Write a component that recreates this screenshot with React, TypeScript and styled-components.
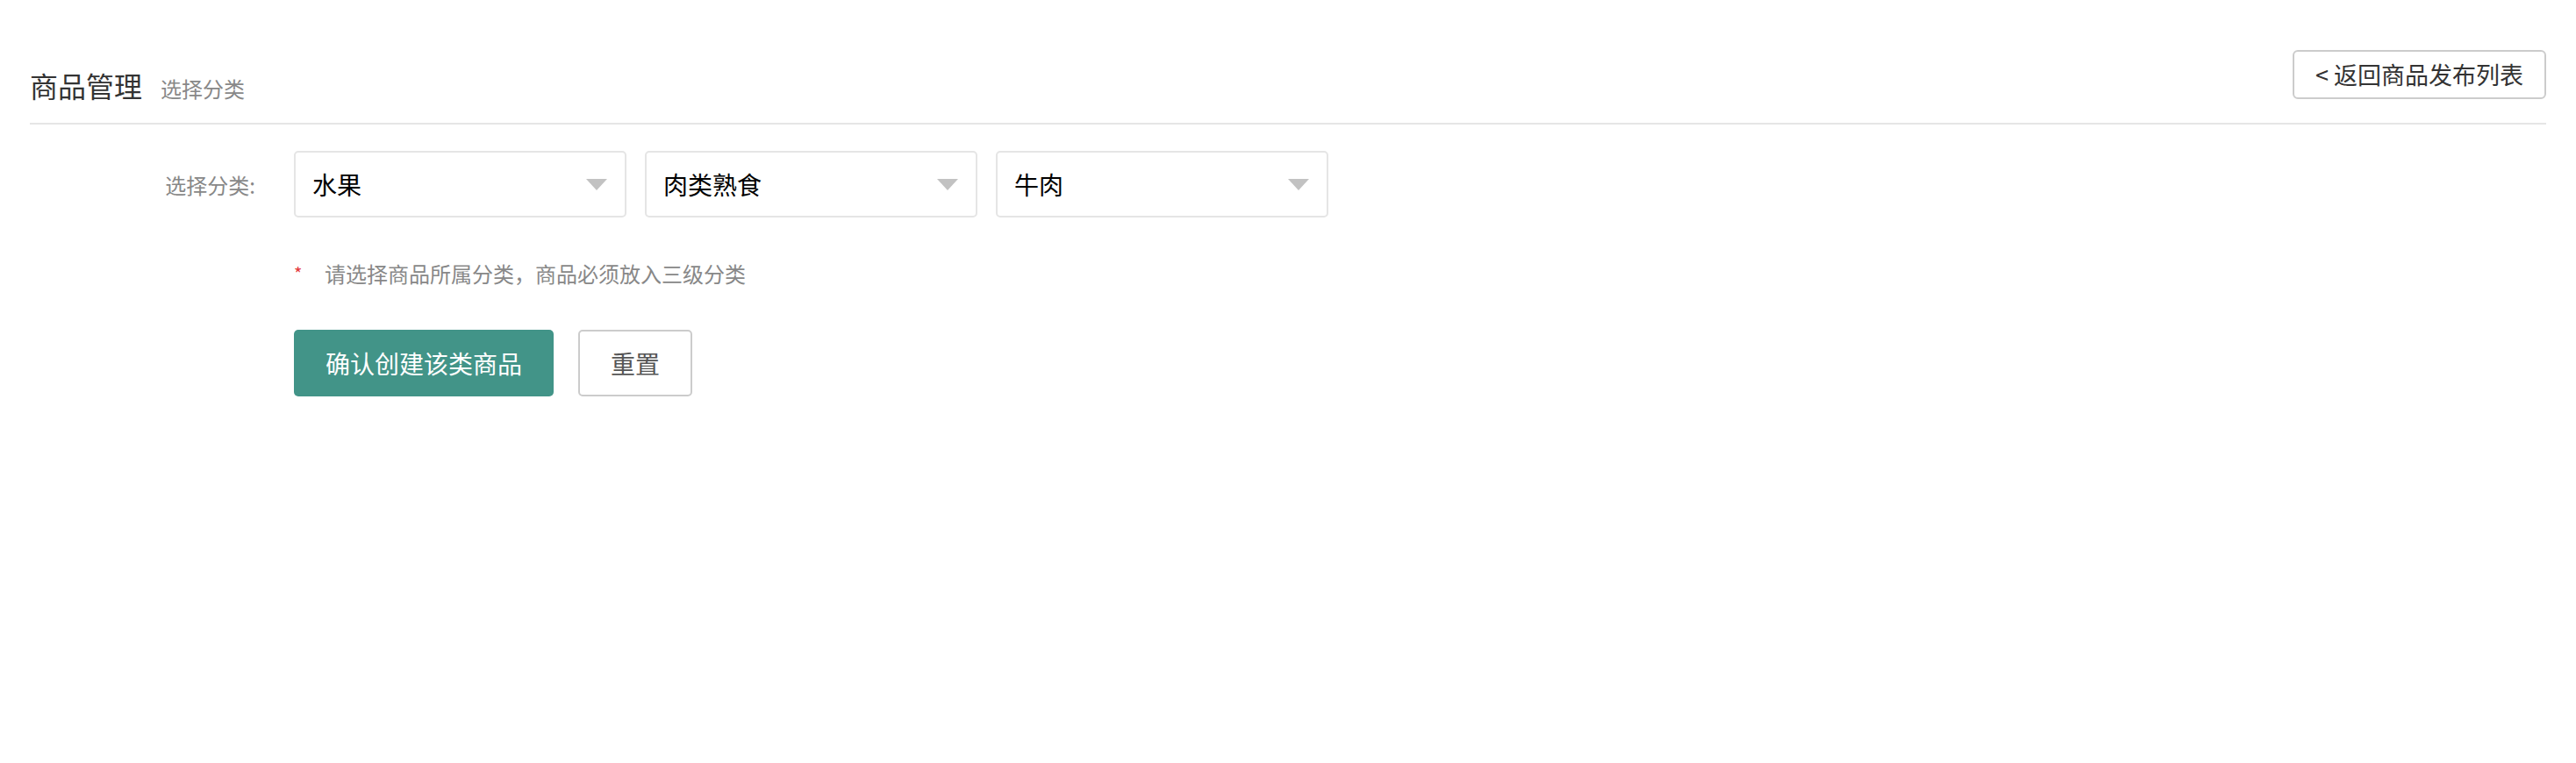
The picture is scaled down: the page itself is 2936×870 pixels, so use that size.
import React from "react";
import styled, { createGlobalStyle } from "styled-components";

const GlobalStyle = createGlobalStyle`
  html, body {
    margin: 0;
    padding: 0;
    background: #ffffff;
  }
  body {
    font-family: "Noto Sans CJK SC", "Noto Sans", sans-serif;
    color: #333333;
  }
  * { box-sizing: border-box; }
`;

const Page = styled.div`
  padding: 0 34px;
`;

const Header = styled.header`
  display: flex;
  justify-content: space-between;
  align-items: flex-end;
  padding: 57px 0 27px;
  border-bottom: 2px solid #e6e6e6;
`;

const TitleGroup = styled.div`
  display: flex;
  align-items: baseline;
  gap: 21px;
`;

const Title = styled.h1`
  margin: 0;
  font-size: 32px;
  line-height: 32px;
  font-weight: 400;
  color: #333333;
`;

const SubTitle = styled.span`
  font-size: 24px;
  line-height: 24px;
  color: #888888;
`;

const BackButton = styled.button`
  height: 56px;
  padding: 0 24px;
  border: 2px solid #cccccc;
  border-radius: 6px;
  background: #ffffff;
  font-family: inherit;
  font-size: 27px;
  line-height: 52px;
  color: #333333;
  cursor: pointer;
`;

const Form = styled.div`
  display: grid;
  grid-template-columns: 301px 1fr;
  padding-top: 30px;
`;

const Label = styled.div`
  display: flex;
  align-items: center;
  justify-content: flex-end;
  padding-right: 44px;
  font-size: 24px;
  color: #888888;
`;

const Field = styled.div<{ $mt?: number; $gap?: number }>`
  display: flex;
  align-items: center;
  gap: ${(p) => p.$gap ?? 21}px;
  margin-top: ${(p) => p.$mt ?? 0}px;
`;

const Select = styled.div`
  width: 379px;
  height: 76px;
  padding: 0 20px 0 19px;
  border: 2px solid #e5e5e5;
  border-radius: 5px;
  background: #ffffff;
  display: flex;
  align-items: center;
  justify-content: space-between;
`;

const SelectValue = styled.span`
  font-size: 28px;
  color: #000000;
`;

const Arrow = styled.span`
  width: 0;
  height: 0;
  border-left: 12px solid transparent;
  border-right: 12px solid transparent;
  border-top: 13px solid #c2c2c2;
`;

const Hint = styled.div`
  display: flex;
  align-items: flex-start;
  font-size: 24px;
  line-height: 24px;
  color: #888888;
`;

const Star = styled.span`
  width: 35px;
  color: #e4393c;
  font-size: 20px;
  line-height: 24px;
`;

const PrimaryButton = styled.button`
  height: 76px;
  padding: 0 36px;
  border: none;
  border-radius: 5px;
  background: #429488;
  color: #ffffff;
  font-family: inherit;
  font-size: 28px;
  cursor: pointer;
`;

const GhostButton = styled.button`
  height: 76px;
  width: 130px;
  border: 2px solid #cccccc;
  border-radius: 5px;
  background: #ffffff;
  color: #555555;
  font-family: inherit;
  font-size: 28px;
  cursor: pointer;
`;

const Empty = styled.div``;

const categories = ["水果", "肉类熟食", "牛肉"];

export default function App() {
  return (
    <>
      <GlobalStyle />
      <Page>
        <Header>
          <TitleGroup>
            <Title>商品管理</Title>
            <SubTitle>选择分类</SubTitle>
          </TitleGroup>
          <BackButton>&lt; 返回商品发布列表</BackButton>
        </Header>
        <Form>
          <Label>选择分类:</Label>
          <Field>
            {categories.map((c) => (
              <Select key={c}>
                <SelectValue>{c}</SelectValue>
                <Arrow />
              </Select>
            ))}
          </Field>
          <Empty />
          <Field $mt={52}>
            <Hint>
              <Star>*</Star>
              请选择商品所属分类，商品必须放入三级分类
            </Hint>
          </Field>
          <Empty />
          <Field $mt={52} $gap={28}>
            <PrimaryButton>确认创建该类商品</PrimaryButton>
            <GhostButton>重置</GhostButton>
          </Field>
        </Form>
      </Page>
    </>
  );
}
